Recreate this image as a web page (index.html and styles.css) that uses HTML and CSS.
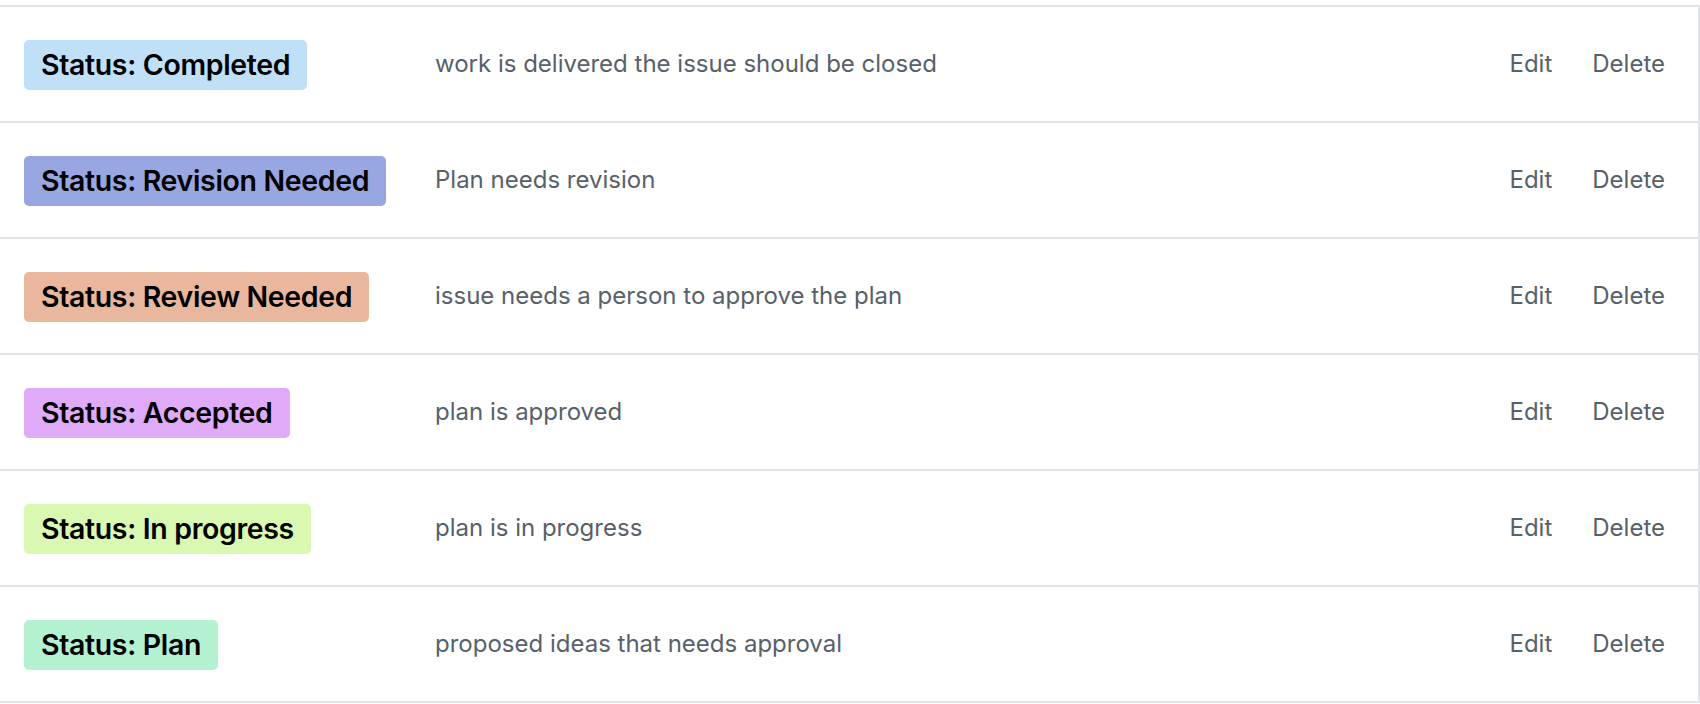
FILE: index.html
```html
<!DOCTYPE html>
<html>
<head>
<meta charset="utf-8">
<link rel="stylesheet" href="styles.css">
</head>
<body>
<div class="labels">
  <div class="row">
    <div class="label-col"><span class="badge c-completed">Status: Completed</span></div>
    <div class="desc">work is delivered the issue should be closed</div>
    <div class="actions"><span>Edit</span><span>Delete</span></div>
  </div>
  <div class="row">
    <div class="label-col"><span class="badge c-revision">Status: Revision Needed</span></div>
    <div class="desc">Plan needs revision</div>
    <div class="actions"><span>Edit</span><span>Delete</span></div>
  </div>
  <div class="row">
    <div class="label-col"><span class="badge c-review">Status: Review Needed</span></div>
    <div class="desc">issue needs a person to approve the plan</div>
    <div class="actions"><span>Edit</span><span>Delete</span></div>
  </div>
  <div class="row">
    <div class="label-col"><span class="badge c-accepted">Status: Accepted</span></div>
    <div class="desc">plan is approved</div>
    <div class="actions"><span>Edit</span><span>Delete</span></div>
  </div>
  <div class="row">
    <div class="label-col"><span class="badge c-progress">Status: In progress</span></div>
    <div class="desc">plan is in progress</div>
    <div class="actions"><span>Edit</span><span>Delete</span></div>
  </div>
  <div class="row">
    <div class="label-col"><span class="badge c-plan">Status: Plan</span></div>
    <div class="desc">proposed ideas that needs approval</div>
    <div class="actions"><span>Edit</span><span>Delete</span></div>
  </div>
</div>
</body>
</html>
```

FILE: styles.css
```css
html, body {
  margin: 0;
  padding: 0;
  background: #ffffff;
}
body {
  padding-top: 5px;
  font-family: Inter, "Noto Sans", sans-serif;
}
.labels {
  width: 1698px;
  border-right: 2px solid #e1e4e8;
  border-bottom: 2px solid #e1e4e8;
}
.row {
  display: flex;
  align-items: center;
  height: 114px;
  border-top: 2px solid #e1e4e8;
  padding-left: 24px;
  padding-right: 33px;
}
.label-col {
  width: 411px;
  flex: none;
}
.badge {
  display: inline-block;
  height: 50px;
  line-height: 50px;
  padding: 0 17px;
  border-radius: 5px;
  font-size: 28.5px;
  letter-spacing: -0.35px;
  font-weight: 600;
  color: #000000;
  margin-top: 2px;
}
.desc {
  flex: 1;
  font-size: 24px;
  color: #586069;
  padding-bottom: 2px;
}
.actions {
  display: flex;
  gap: 40px;
  font-size: 24px;
  color: #586069;
  padding-bottom: 2px;
}
.c-completed { background: #bfe0f6; }
.c-revision { background: #98a6e2; }
.c-review { background: #e9b79e; }
.c-accepted { background: #dfaaf8; }
.c-progress { background: #d9f8b2; }
.c-plan { background: #b3f1d0; }
```
